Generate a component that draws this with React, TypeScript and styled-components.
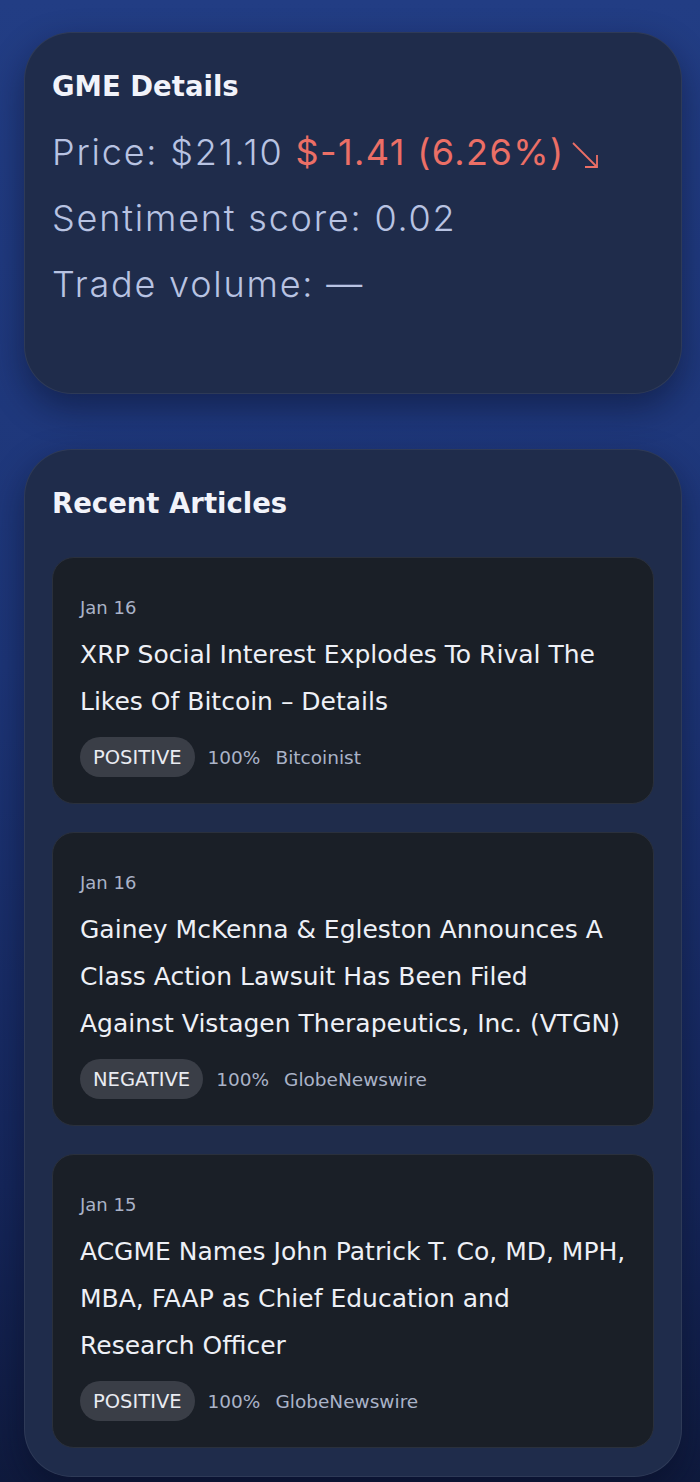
import React from 'react';
import styled, { createGlobalStyle } from 'styled-components';

const GlobalStyle = createGlobalStyle`
  html, body {
    margin: 0;
    padding: 0;
  }
  body {
    background: linear-gradient(180deg, #223d84 0%, #1d3577 45%, #15265a 80%, #0f1a3d 100%);
    font-family: 'DejaVu Sans', Inter, sans-serif;
    min-height: 1482px;
  }
`;

const Page = styled.main`
  display: flex;
  flex-direction: column;
  gap: 55px;
  padding: 32px 18px 6px 24px;
`;

const Panel = styled.section<{ $bottom?: number }>`
  background: #1f2c4b;
  border: 1px solid rgba(255, 255, 255, 0.07);
  border-radius: 48px;
  box-shadow: 0 14px 34px rgba(6, 12, 32, 0.45);
  padding: 26px 27px ${(p) => p.$bottom ?? 28}px;
`;

const PanelTitle = styled.h2`
  margin: 0 0 6px;
  font-size: 27.5px;
  line-height: 54px;
  font-weight: 700;
  color: #f1f3fa;
`;

const Stat = styled.p`
  margin: 0;
  font-family: Inter, 'DejaVu Sans', sans-serif;
  font-size: 36px;
  line-height: 66px;
  font-weight: 300;
  color: #b8c3e2;
  letter-spacing: 1.8px;
  display: flex;
  align-items: center;
  white-space: nowrap;
`;

const Change = styled.span`
  color: #ec6f66;
  font-weight: 400;
  margin-left: 12px;
  letter-spacing: 1.4px;
  display: inline-flex;
  align-items: center;
`;

const ArrowIcon = styled.svg`
  width: 30px;
  height: 30px;
  margin-left: 6px;
  margin-top: 6px;
`;

const ArticleList = styled.div`
  display: flex;
  flex-direction: column;
  gap: 28px;
  margin-top: 27px;
`;

const Article = styled.article`
  background: #1a1f27;
  border: 1px solid #2a303c;
  border-radius: 22px;
  padding: 35px 27px 26px;
`;

const DateLine = styled.div`
  font-size: 18px;
  line-height: 29px;
  color: #aab3c8;
`;

const Headline = styled.h3`
  margin: 9px 0 12px;
  font-size: 25px;
  line-height: 47px;
  font-weight: 400;
  color: #eef0f6;
`;

const MetaRow = styled.div`
  display: flex;
  align-items: center;
  gap: 13px;
  font-size: 18.5px;
  color: #aab3c8;
`;

const Badge = styled.span`
  display: inline-flex;
  align-items: center;
  height: 40px;
  padding: 0 13px;
  border-radius: 20px;
  background: #3a3e47;
  color: #e9ebf1;
  font-size: 19.5px;
`;

const Source = styled.span`
  margin-left: 2px;
`;

type Item = {
  date: string;
  title: string;
  sentiment: string;
  confidence: string;
  source: string;
};

const articles: Item[] = [
  {
    date: 'Jan 16',
    title: 'XRP Social Interest Explodes To Rival The Likes Of Bitcoin – Details',
    sentiment: 'POSITIVE',
    confidence: '100%',
    source: 'Bitcoinist',
  },
  {
    date: 'Jan 16',
    title:
      'Gainey McKenna & Egleston Announces A Class Action Lawsuit Has Been Filed Against Vistagen Therapeutics, Inc. (VTGN)',
    sentiment: 'NEGATIVE',
    confidence: '100%',
    source: 'GlobeNewswire',
  },
  {
    date: 'Jan 15',
    title:
      'ACGME Names John Patrick T. Co, MD, MPH, MBA, FAAP as Chief Education and Research Officer',
    sentiment: 'POSITIVE',
    confidence: '100%',
    source: 'GlobeNewswire',
  },
];

export default function App() {
  return (
    <>
      <GlobalStyle />
      <Page>
        <Panel $bottom={76}>
          <PanelTitle>GME Details</PanelTitle>
          <Stat>
            Price: $21.10
            <Change>
              $-1.41 (6.26%)
              <ArrowIcon viewBox="0 0 30 30" fill="none" stroke="#ec6f66" strokeWidth="1.8">
                <path d="M3 3 L27 27" />
                <path d="M27 15 L27 27 L15 27" />
              </ArrowIcon>
            </Change>
          </Stat>
          <Stat>Sentiment score: 0.02</Stat>
          <Stat>Trade volume: —</Stat>
        </Panel>

        <Panel>
          <PanelTitle>Recent Articles</PanelTitle>
          <ArticleList>
            {articles.map((a, i) => (
              <Article key={i}>
                <DateLine>{a.date}</DateLine>
                <Headline>{a.title}</Headline>
                <MetaRow>
                  <Badge>{a.sentiment}</Badge>
                  <span>{a.confidence}</span>
                  <Source>{a.source}</Source>
                </MetaRow>
              </Article>
            ))}
          </ArticleList>
        </Panel>
      </Page>
    </>
  );
}
